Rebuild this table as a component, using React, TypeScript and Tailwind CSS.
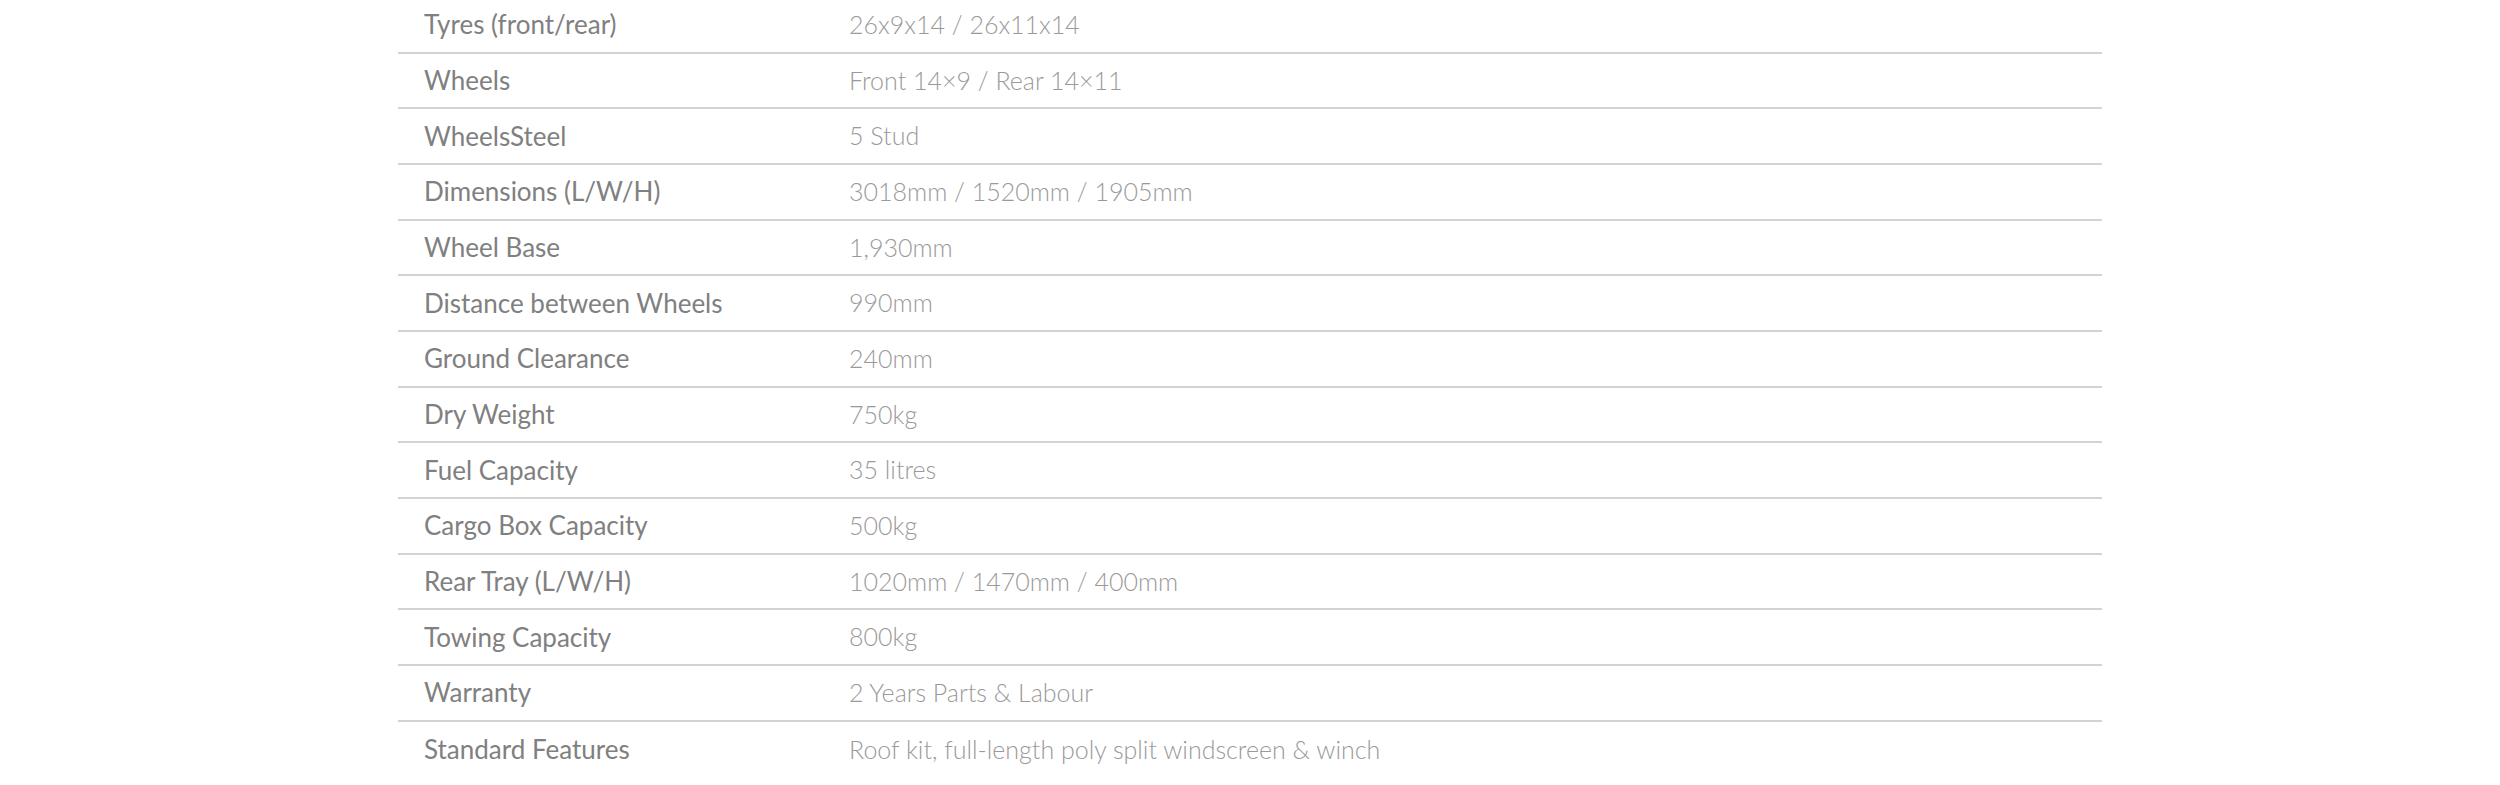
const specs: [string, string][] = [
  ['Tyres (front/rear)', '26x9x14 / 26x11x14'],
  ['Wheels', 'Front 14×9 / Rear 14×11'],
  ['WheelsSteel', '5 Stud'],
  ['Dimensions (L/W/H)', '3018mm / 1520mm / 1905mm'],
  ['Wheel Base', '1,930mm'],
  ['Distance between Wheels', '990mm'],
  ['Ground Clearance', '240mm'],
  ['Dry Weight', '750kg'],
  ['Fuel Capacity', '35 litres'],
  ['Cargo Box Capacity', '500kg'],
  ['Rear Tray (L/W/H)', '1020mm / 1470mm / 400mm'],
  ['Towing Capacity', '800kg'],
  ['Warranty', '2 Years Parts & Labour'],
  ['Standard Features', 'Roof kit, full-length poly split windscreen & winch'],
]

export default function App() {
  return (
    <main className="min-h-screen bg-white font-['Lato','Liberation_Sans',sans-serif]">
      <div className="mx-auto -mt-[2px] w-[1704px]">
        {specs.map(([label, value], i) => (
          <div
            key={label}
            className={`flex h-[55.67px] items-center ${
              i < specs.length - 1 ? 'border-b-2 border-[#d3d3d3]' : ''
            }`}
          >
            <div className="w-[451px] shrink-0 pl-[26px] text-[26px] font-normal text-[#808080]">
              {label}
            </div>
            <div className="flex-1 text-[25px] font-light text-[#9a9a9a]">{value}</div>
          </div>
        ))}
      </div>
    </main>
  )
}
